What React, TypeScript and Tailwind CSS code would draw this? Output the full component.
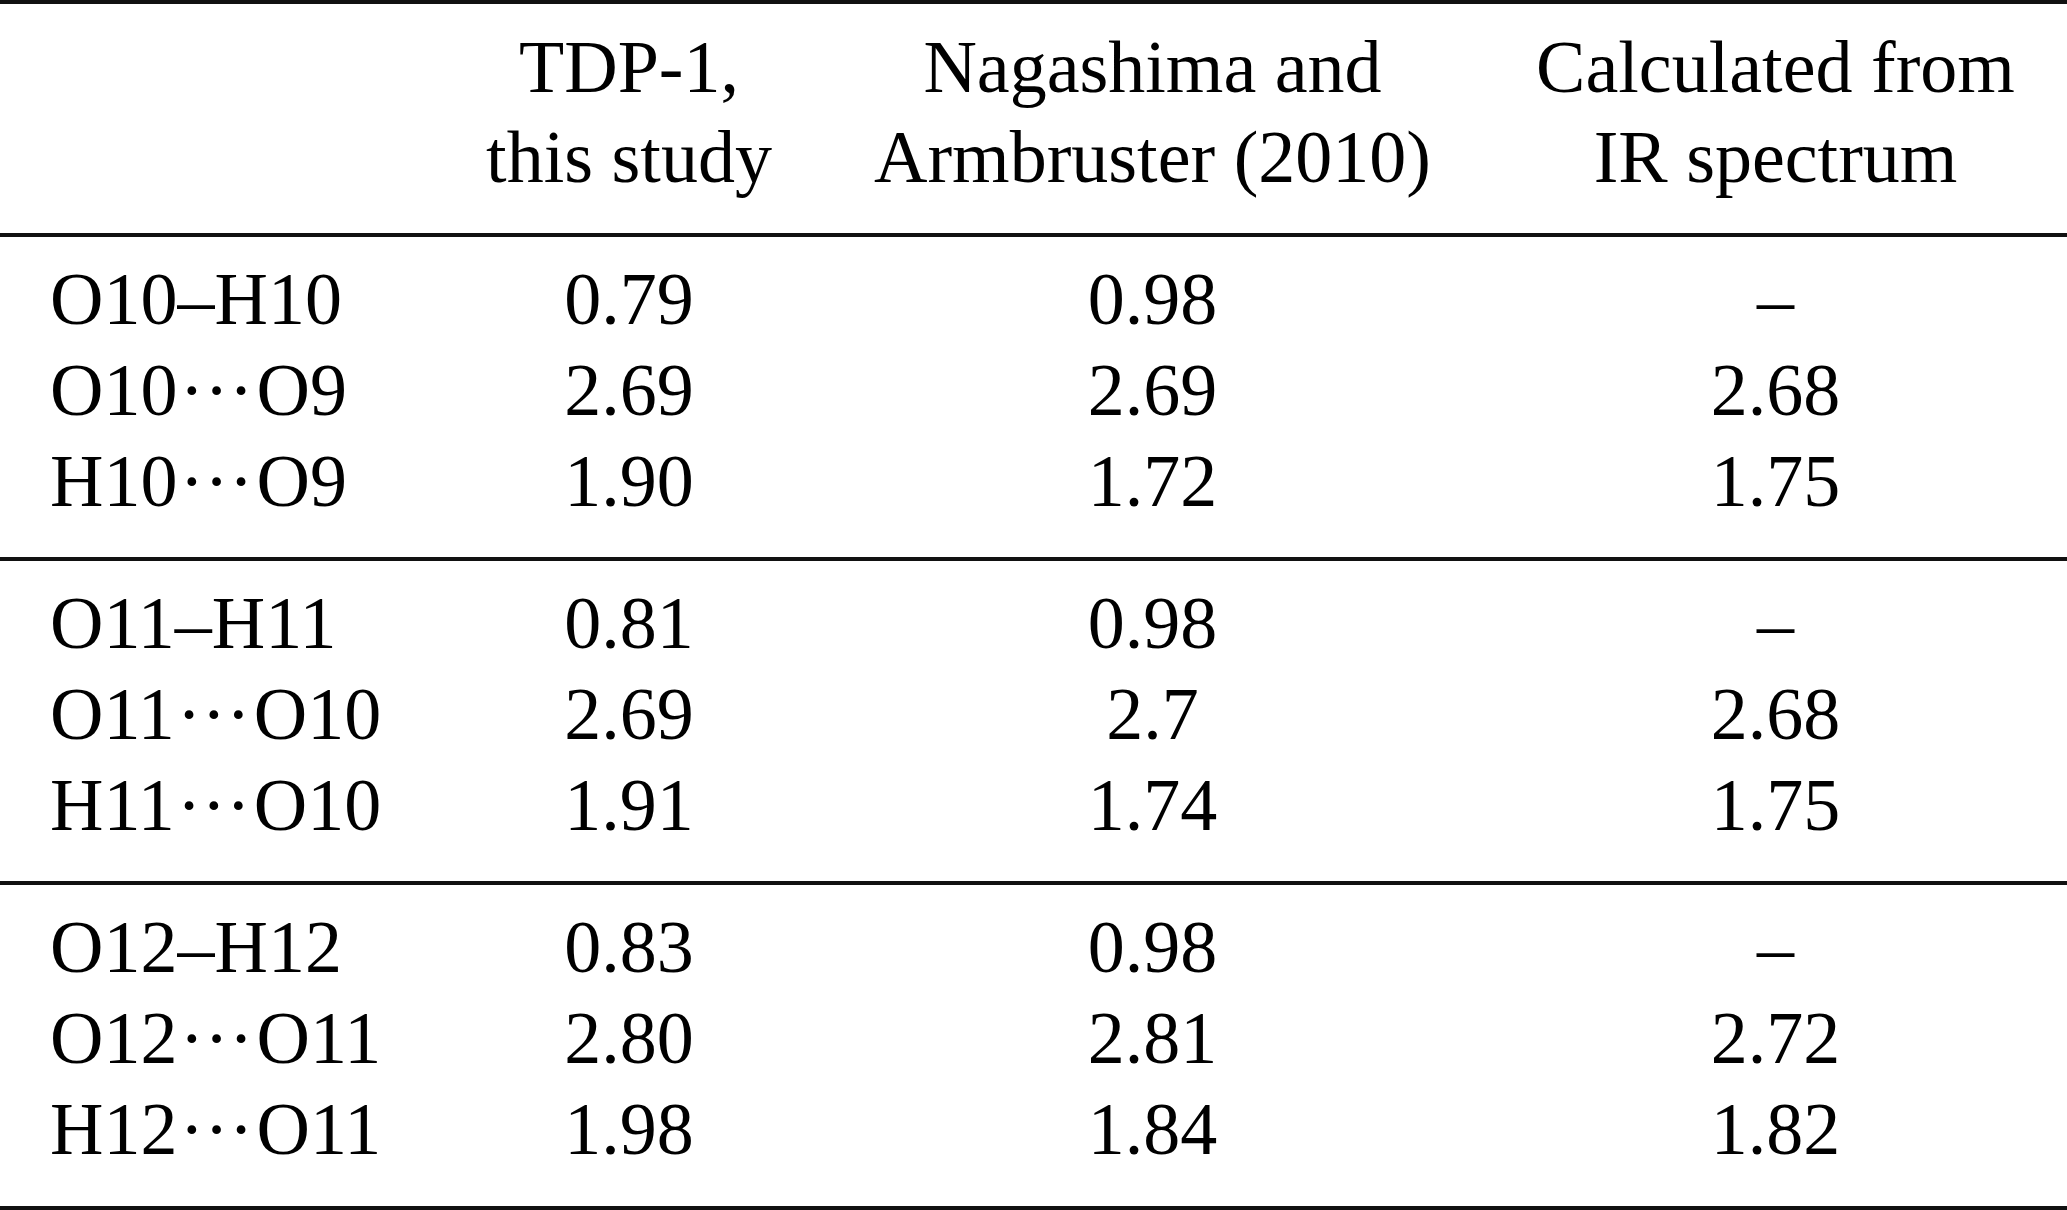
import { Fragment } from "react";

type Bond = { a: string; link: "dash" | "dots"; b: string };
type Row = { bond: Bond; tdp: string; nag: string; ir: string };

const groups: Row[][] = [
  [
    { bond: { a: "O10", link: "dash", b: "H10" }, tdp: "0.79", nag: "0.98", ir: "–" },
    { bond: { a: "O10", link: "dots", b: "O9" }, tdp: "2.69", nag: "2.69", ir: "2.68" },
    { bond: { a: "H10", link: "dots", b: "O9" }, tdp: "1.90", nag: "1.72", ir: "1.75" },
  ],
  [
    { bond: { a: "O11", link: "dash", b: "H11" }, tdp: "0.81", nag: "0.98", ir: "–" },
    { bond: { a: "O11", link: "dots", b: "O10" }, tdp: "2.69", nag: "2.7", ir: "2.68" },
    { bond: { a: "H11", link: "dots", b: "O10" }, tdp: "1.91", nag: "1.74", ir: "1.75" },
  ],
  [
    { bond: { a: "O12", link: "dash", b: "H12" }, tdp: "0.83", nag: "0.98", ir: "–" },
    { bond: { a: "O12", link: "dots", b: "O11" }, tdp: "2.80", nag: "2.81", ir: "2.72" },
    { bond: { a: "H12", link: "dots", b: "O11" }, tdp: "1.98", nag: "1.84", ir: "1.82" },
  ],
];

function Rule() {
  return <div className="h-[4px] bg-[#111]" />;
}

// \cdots — three centred dots with math spacing
function Dots() {
  return (
    <span className="inline-flex w-[79px] justify-between pl-[2px] pr-[3px]">
      <span>·</span>
      <span>·</span>
      <span>·</span>
    </span>
  );
}

function BondLabel({ bond }: { bond: Bond }) {
  return (
    <span className="whitespace-nowrap">
      {bond.a}
      {bond.link === "dash" ? "–" : <Dots />}
      {bond.b}
    </span>
  );
}

const cols = "grid grid-cols-[437px_384px_663px_583px]";

export default function App() {
  return (
    <div className="min-h-screen bg-white text-black font-['Liberation_Serif','Times_New_Roman',serif] text-[74px]">
      <Rule />
      {/* Header */}
      <div className={`${cols} pt-[18px] pb-[31px] leading-[90px]`}>
        <div />
        <div className="text-center whitespace-nowrap">
          TDP-1,
          <br />
          this study
        </div>
        <div className="text-center whitespace-nowrap">
          Nagashima and
          <br />
          Armbruster (2010)
        </div>
        <div className="text-center whitespace-nowrap">
          Calculated from
          <br />
          IR spectrum
        </div>
      </div>
      <Rule />
      {groups.map((g, gi) => (
        <Fragment key={gi}>
          <div className={`${cols} pt-[17px] ${gi === groups.length - 1 ? "pb-[31px]" : "pb-[30px]"} leading-[91px]`}>
            {g.map((r, ri) => (
              <Fragment key={ri}>
                <div className="pl-[50px]">
                  <BondLabel bond={r.bond} />
                </div>
                <div className="text-center">{r.tdp}</div>
                <div className="text-center">{r.nag}</div>
                <div className="text-center">{r.ir}</div>
              </Fragment>
            ))}
          </div>
          <Rule />
        </Fragment>
      ))}
    </div>
  );
}
